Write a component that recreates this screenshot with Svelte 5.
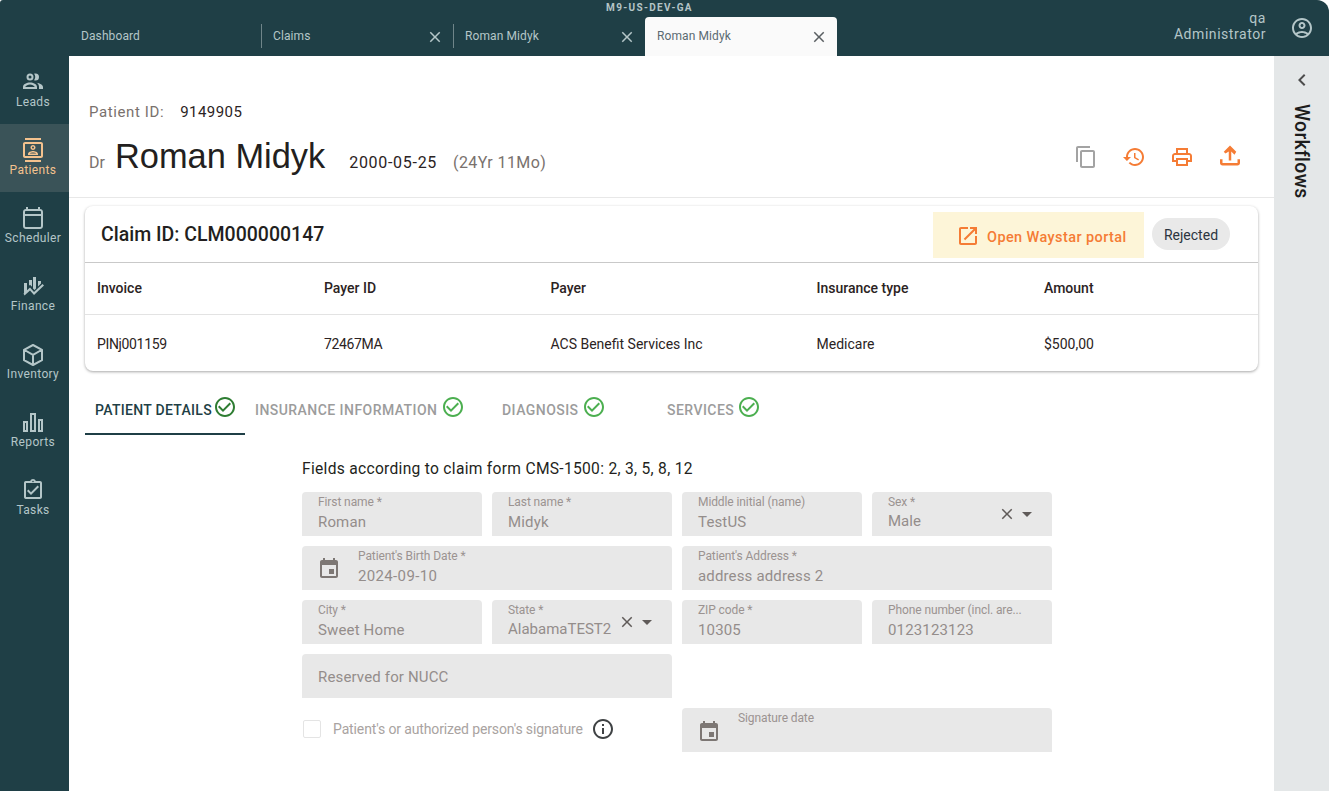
<script>
  const P = {
    close: 'M19 6.41 17.59 5 12 10.59 6.41 5 5 6.41 10.59 12 5 17.59 6.41 19 12 13.41 17.59 19 19 17.59 13.41 12z',
    check: 'M16.59 7.58 10 14.17l-3.59-3.58L5 12l5 5 8-8zM12 2C6.48 2 2 6.48 2 12s4.48 10 10 10 10-4.48 10-10S17.52 2 12 2zm0 18c-4.42 0-8-3.58-8-8s3.58-8 8-8 8 3.58 8 8-3.58 8-8 8z',
    event: 'M17 12h-5v5h5v-5zM16 1v2H8V1H6v2H5c-1.11 0-1.99.9-1.99 2L3 19c0 1.1.89 2 2 2h14c1.1 0 2-.9 2-2V5c0-1.1-.9-2-2-2h-1V1h-2zm3 18H5V8h14v11z'
  };
  const nav = [
    { label: 'Leads', d: 'M9 3.500a3.500 3.500 0 1 0 0 7 3.500 3.500 0 0 0 0-7zm0 2a1.500 1.500 0 1 1 0 3 1.500 1.500 0 0 1 0-3zM14.500 3.500c-.5 0-1 .1-1.400.3a5.500 5.500 0 0 1 0 6.400c.4.2.9.3 1.400.3a3.500 3.500 0 0 0 0-7zM9 12.500c-3.200 0-7 1.700-7 4.500v2h14v-2c0-2.800-3.800-4.500-7-4.500zm0 2c2 0 4 1 4.800 2.500H4.200C5 15.500 7 14.500 9 14.500zM15.500 12.700c2 .9 2.500 2.900 2.500 4.300v2h4v-2c0-2.300-3.300-4-6.500-4.300z' },
    { label: 'Patients', active: true, d: 'M20 0H4v2h16V0zM4 24h16v-2H4v2zM20 4H4c-1.100 0-2 .9-2 2v12c0 1.100.9 2 2 2h16c1.100 0 2-.9 2-2V6c0-1.100-.9-2-2-2zm0 14H4V6h16v12zm-8-6c1.380 0 2.500-1.120 2.500-2.500S13.380 7 12 7 9.500 8.120 9.500 9.500 10.620 12 12 12zm0-3.500c.55 0 1 .45 1 1s-.45 1-1 1-1-.45-1-1 .45-1 1-1zM17 15.990c0-2.090-3.310-2.990-5-2.990s-5 .9-5 2.990V17h10v-1.010zM8.810 15.500c.61-.52 2.030-1 3.190-1 1.170 0 2.590.48 3.200 1H8.810z' },
    { label: 'Scheduler', d: 'M17 1v2H7V1H5v2C3.300 3 2 4.300 2 6v14c0 1.700 1.300 3 3 3h14c1.700 0 3-1.300 3-3V6c0-1.700-1.300-3-3-3V1h-2zM4 10h16v10c0 .6-.4 1-1 1H5c-.6 0-1-.4-1-1V10zm0-2V6c0-.6.4-1 1-1h14c.6 0 1 .4 1 1v2H4z' },
    { label: 'Finance', d: 'M3 9h3v7.500l-3 3zM8 6h3v6.700l-2-2-1 1zM12 3h3v11.500l-1.500 1.500-1.500-1.500zM17 7h3v2.500l-3 3zM2.500 19.500 9 13.500l4 4.500 8.500-8 1.500 1.500-10 9.500-4-4.500-5.500 5z' },
    { label: 'Inventory', stroke: true, d: 'M12 3 21 7.800v10.400L12 23l-9-4.800V7.800zM3.500 8 12 12.800 20.500 8M12 12.800V23' },
    { label: 'Reports', d: 'M9 3v19h6V3H9zm2 2h2v15h-2V5zM2 11v11h5V11H2zm2 2h1v7H4v-7zm13-4v13h5V9h-5zm2 2h1v9h-1v-9z' },
    { label: 'Tasks', d: 'M18 9l-1.410-1.420L10 14.170l-2.590-2.580L6 13l4 4zm1-6h-4.180C14.400 1.840 13.300 1 12 1c-1.300 0-2.400.84-2.820 2H5c-.14 0-.27.01-.4.04-.39.08-.74.28-1.010.55-.18.18-.33.4-.43.64-.1.23-.16.49-.16.77v14c0 .27.06.54.16.78s.25.45.43.64c.27.27.62.47 1.010.55.13.02.26.03.4.03h14c1.100 0 2-.9 2-2V5c0-1.100-.9-2-2-2zm-7-.25c.41 0 .75.34.75.75s-.34.75-.75.75-.75-.34-.75-.75.34-.75.75-.75zM19 19H5V5h14v14z' }
  ];
  const tabs = [
    { label: 'Dashboard' },
    { label: 'Claims', close: true },
    { label: 'Roman Midyk', close: true },
    { label: 'Roman Midyk', close: true, active: true }
  ];
  const steps = [
    { label: 'PATIENT DETAILS', active: true, w: 160, pad: 10, gap: 1 },
    { label: 'INSURANCE INFORMATION', w: 232, pad: 10, gap: 4 },
    { label: 'DIAGNOSIS', w: 160, pad: 25, gap: 3 },
    { label: 'SERVICES', w: 130, pad: 30, gap: 3 }
  ];
  const columns = ['Invoice', 'Payer ID', 'Payer', 'Insurance type', 'Amount'];
  const row = ['PINj001159', '72467MA', 'ACS Benefit Services Inc', 'Medicare', '$500,00'];
  const actions = [
    { c: 'grey', d: 'M16 1H4c-1.100 0-2 .9-2 2v14h2V3h12V1zm3 4H8c-1.100 0-2 .9-2 2v14c0 1.100.9 2 2 2h11c1.100 0 2-.9 2-2V7c0-1.100-.9-2-2-2zm0 16H8V7h11v14z' },
    { c: 'orange', d: 'M13 3c-4.970 0-9 4.030-9 9H1l3.890 3.890.07.14L9 12H6c0-3.870 3.130-7 7-7s7 3.130 7 7-3.130 7-7 7c-1.930 0-3.680-.79-4.940-2.060l-1.420 1.420C8.270 19.990 10.510 21 13 21c4.970 0 9-4.030 9-9s-4.030-9-9-9zm-1 5v5l4.280 2.540.72-1.210-3.500-2.080V8H12z' },
    { c: 'orange', d: 'M19 8h-1V3H6v5H5c-1.660 0-3 1.340-3 3v6h4v4h12v-4h4v-6c0-1.660-1.340-3-3-3zM8 5h8v3H8V5zm8 14H8v-4h8v4zm2-4v-2H6v2H4v-4c0-.55.45-1 1-1h14c.55 0 1 .45 1 1v4h-2z' },
    { c: 'orange up', d: 'M18 15v3H6v-3H4v3c0 1.100.9 2 2 2h12c1.100 0 2-.9 2-2v-3h-2zM7 9l1.410 1.410L11 8.830V16h2V8.830l2.590 2.580L17 9l-5-5-5 5z' }
  ];
</script>

<div class="shell">
  <header class="top">
    <div class="env">M9-US-DEV-GA</div>
    <div class="tabs">
      {#each tabs as t, i}
        <div class="tab" class:active={t.active} class:divided={i > 0 && !t.active}>
          <span>{t.label}</span>
          {#if t.close}
            <svg viewBox="0 0 24 24" class="tab-x"><path d={P.close} /></svg>
          {/if}
        </div>
      {/each}
    </div>
    <div class="user">
      <div class="user-text"><div>qa</div><div>Administrator</div></div>
      <svg viewBox="0 0 24 24" class="avatar"><path d="M12 2C6.480 2 2 6.480 2 12s4.480 10 10 10 10-4.480 10-10S17.520 2 12 2zM7.350 18.500C8.660 17.560 10.260 17 12 17s3.340.56 4.650 1.500c-1.310.94-2.910 1.500-4.650 1.500s-3.340-.56-4.650-1.500zm10.790-1.380C16.450 15.800 14.320 15 12 15s-4.450.8-6.140 2.120C4.700 15.730 4 13.950 4 12c0-4.420 3.580-8 8-8s8 3.580 8 8c0 1.950-.7 3.730-1.860 5.120zM12 6c-1.930 0-3.500 1.570-3.500 3.500S10.070 13 12 13s3.500-1.570 3.500-3.500S13.930 6 12 6zm0 5c-.83 0-1.500-.67-1.500-1.500S11.170 8 12 8s1.500.67 1.500 1.500S12.830 11 12 11z" /></svg>
    </div>
  </header>

  <div class="body">
    <nav class="side">
      {#each nav as n}
        <div class="nav-item" class:active={n.active}>
          <svg viewBox="0 0 24 24"><path d={n.d} class:st={n.stroke} /></svg>
          <span>{n.label}</span>
        </div>
      {/each}
    </nav>

    <main class="main">
      <section class="patient">
        <div class="pid"><span class="muted">Patient ID:</span><span class="pid-val">9149905</span></div>
        <div class="name-row">
          <span class="title muted">Dr</span>
          <h1>Roman Midyk</h1>
          <span class="dob">2000-05-25</span>
          <span class="age">(24Yr 11Mo)</span>
          <div class="actions">
            {#each actions as a}
              <svg viewBox="0 0 24 24" class={a.c}><path d={a.d} /></svg>
            {/each}
          </div>
        </div>
      </section>

      <div class="content">
        <section class="card">
          <div class="card-head">
            <h2>Claim ID: CLM000000147</h2>
            <div class="portal">
              <svg viewBox="0 0 24 24"><path d="M19 19H5V5h7V3H5c-1.110 0-2 .9-2 2v14c0 1.100.89 2 2 2h14c1.100 0 2-.9 2-2v-7h-2v7zM14 3v2h3.590l-9.830 9.830 1.410 1.410L19 6.410V10h2V3h-7z" /></svg>
              <span>Open Waystar portal</span>
            </div>
            <div class="chip"><span>Rejected</span></div>
          </div>
          <div class="tr th">{#each columns as c}<div>{c}</div>{/each}</div>
          <div class="tr td">{#each row as c}<div>{c}</div>{/each}</div>
        </section>

        <div class="steps">
          {#each steps as s}
            <div class="step" class:active={s.active} style="width:{s.w}px;padding-left:{s.pad}px;gap:{s.gap}px">
              <span>{s.label}</span>
              <svg viewBox="0 0 24 24"><path d={P.check} /></svg>
            </div>
          {/each}
        </div>

        <form class="form">
          <p class="hint">Fields according to claim form CMS-1500: 2, 3, 5, 8, 12</p>
          <div class="grid">
            <div class="field"><label>First name *</label><div class="val">Roman</div></div>
            <div class="field"><label>Last name *</label><div class="val">Midyk</div></div>
            <div class="field"><label>Middle initial (name)</label><div class="val">TestUS</div></div>
            <div class="field select"><label>Sex *</label><div class="val">Male</div>
              <div class="sel-ic"><svg viewBox="0 0 24 24"><path d={P.close} /></svg><i></i></div></div>

            <div class="field wide date"><svg viewBox="0 0 24 24" class="cal"><path d={P.event} /></svg><div class="date-txt"><label>Patient's Birth Date *</label><div class="val">2024-09-10</div></div></div>
            <div class="field wide"><label>Patient's Address *</label><div class="val">address address 2</div></div>

            <div class="field"><label>City *</label><div class="val">Sweet Home</div></div>
            <div class="field select"><label>State *</label><div class="val">AlabamaTEST2</div>
              <div class="sel-ic"><svg viewBox="0 0 24 24"><path d={P.close} /></svg><i></i></div></div>
            <div class="field"><label>ZIP code *</label><div class="val">10305</div></div>
            <div class="field"><label>Phone number (incl. are...</label><div class="val">0123123123</div></div>

            <div class="field wide placeholder"><div class="val">Reserved for NUCC</div></div>
            <div class="wide"></div>

            <div class="wide sign">
              <span class="box"></span>
              <span class="sign-l">Patient's or authorized person's signature</span>
              <svg viewBox="0 0 24 24"><path d="M11 7h2v2h-2zm0 4h2v6h-2zm1-9C6.480 2 2 6.480 2 12s4.480 10 10 10 10-4.480 10-10S17.520 2 12 2zm0 18c-4.410 0-8-3.590-8-8s3.590-8 8-8 8 3.590 8 8-3.590 8-8 8z" /></svg>
            </div>
            <div class="field wide date"><svg viewBox="0 0 24 24" class="cal low"><path d={P.event} /></svg><div class="date-txt"><label>Signature date</label></div></div>
          </div>
        </form>
      </div>
    </main>

    <aside class="flows">
      <svg viewBox="0 0 24 24"><path d="M15.410 7.410 14 6l-6 6 6 6 1.410-1.410L10.830 12z" /></svg>
      <div class="flows-t">Workflows</div>
    </aside>
  </div>
</div>

<style>
  :global(body) { margin: 0; background: #fff; font-family: Roboto, "Liberation Sans", sans-serif; }
  .shell { width: 1329px; height: 791px; display: flex; flex-direction: column; overflow: hidden; background: #1f3f46; border-radius: 3px 12px 0 0; }
  .top { height: 56px; flex: none; position: relative; display: flex; align-items: flex-end; padding-left: 69px; }
  .env { position: absolute; left: 0; width: 1299px; top: 2px; text-align: center; font-size: 10px; font-weight: 700; letter-spacing: 1.35px; line-height: 12px; color: #b4c4c6; }
  .tabs { display: flex; height: 39px; }
  .tab { width: 192px; box-sizing: border-box; height: 39px; display: flex; align-items: center; justify-content: space-between; padding: 0 9px 0 12px; font-size: 12px; font-weight: 400; letter-spacing: .1px; color: #b4c6c8; position: relative; }
  .tab span { position: relative; top: -1px; }
  .tab.divided::before { content: ""; position: absolute; left: 0; top: 7px; height: 24px; width: 1px; background: #6f8589; }
  .tab.active { background: #fafafa; border-radius: 4px 4px 0 0; color: #5b6a72; }
  .tab-x { width: 18px; height: 18px; fill: #b4c6c8; }
  .tab.active .tab-x { fill: #5a5f62; }
  .user { position: absolute; right: 0; top: 0; height: 56px; display: flex; align-items: center; }
  .user-text { text-align: right; font-size: 14px; line-height: 16px; color: #b4c6c8; letter-spacing: .55px; margin-top: -5px; }
  .avatar { width: 24px; height: 24px; fill: #b4c6c8; margin: 0 15px 0 24px; }
  .body { flex: 1; display: flex; min-height: 0; }
  .side { width: 69px; flex: none; display: flex; flex-direction: column; }
  .nav-item { height: 68px; display: flex; flex-direction: column; align-items: center; padding: 14px 3px 0 0; box-sizing: border-box; color: #b4c6c8; font-size: 12px; line-height: 14px; letter-spacing: .35px; font-weight: 400; }
  .nav-item svg { width: 24px; height: 24px; fill: #b4c6c8; flex: none; margin-bottom: 1px; }
  .st { fill: none; stroke: #b4c6c8; stroke-width: 2; stroke-linejoin: round; }
  .nav-item.active { background: #3a5358; color: #f4c28e; }
  .nav-item.active svg { fill: #f4c28e; }
  .main { flex: 1; background: #fff; min-width: 0; }
  .patient { height: 142px; box-sizing: border-box; border-bottom: 1px solid #e8e8e8; padding: 47px 32px 0 20px; }
  .pid { font-size: 15px; line-height: 18px; display: flex; gap: 16px; letter-spacing: .6px; }
  .muted { color: #79716d; }
  .pid-val { color: #2b2323; letter-spacing: .45px; }
  .name-row { display: flex; align-items: baseline; margin-top: 13px; position: relative; }
  .title { font-size: 16px; width: 26px; }
  h1 { margin: 0; font: 400 34.4px/44px "Liberation Sans", sans-serif; color: #231f20; }
  .dob { margin-left: 24px; font-size: 16px; color: #2b2323; letter-spacing: .7px; }
  .age { margin-left: 16px; font-size: 16px; color: #79716d; letter-spacing: .4px; }
  .actions { margin-left: auto; display: flex; gap: 24px; align-self: center; margin-top: 2px; }
  .actions svg { width: 24px; height: 24px; }
  .actions .up { transform: translateY(-1.5px) scale(1.25); }
  .grey { fill: #a3a3a3; }
  .orange { fill: #f57c35; }
  .content { padding: 8px 16px 0; }
  .card { height: 165px; box-sizing: border-box; border-radius: 8px; background: #fff; box-shadow: 0 1px 3px rgba(0,0,0,.35); overflow: hidden; }
  .card-head { height: 56px; display: flex; align-items: center; padding: 0 28px 0 16px; border-bottom: 1px solid #c9c9c9; }
  h2 { margin: 0; font-size: 19.5px; font-weight: 500; color: #231f20; flex: 1; }
  .portal { width: 211px; height: 46px; margin-top: 1px; background: #fdf5d8; display: flex; align-items: center; padding-left: 23px; box-sizing: border-box; gap: 7px; color: #f57c35; font-size: 14.5px; font-weight: 500; letter-spacing: .4px; }
  .portal svg { width: 24px; height: 24px; fill: #f57c35; margin-top: 3px; }
  .portal span { margin-top: 5px; }
  .chip { margin-left: 8px; width: 78px; height: 32px; border-radius: 16px; background: #e9e9e9; display: flex; align-items: center; justify-content: center; font-size: 14px; color: #2c3540; }
  .chip span { margin-top: 1px; }
  .tr { display: grid; grid-template-columns: 227px 226.500px 266px 227.500px 1fr; padding-left: 12px; font-size: 14px; color: #2b2323; }
  .th { height: 51px; align-items: center; font-weight: 500; border-bottom: 1px solid #e3e3e3; }
  .th div { margin-top: -2px; }
  .td { height: 57px; align-items: center; }
  .td div:nth-child(-n+2) { letter-spacing: -.35px; }
  .steps { display: flex; height: 50px; margin-top: 14px; }
  .step { height: 50px; box-sizing: border-box; display: flex; align-items: center; font-size: 14px; font-weight: 500; letter-spacing: .45px; color: #9c9c9c; padding-bottom: 2px; }
  .step span { margin-top: 1px; }
  .step.active { color: #1f3f46; border-bottom: 2px solid #1f3f46; padding-bottom: 0; letter-spacing: .3px; }
  .step svg { width: 24px; height: 24px; fill: #4caf50; flex: none; margin-top: -4px; }
  .step.active svg { fill: #2e7d32; }
  .form { width: 750px; margin: 24px 0 0 217px; }
  .hint { margin: 0 0 13px; font-size: 15.6px; line-height: 20px; color: #231f20; letter-spacing: .29px; white-space: nowrap; }
  .grid { display: grid; grid-template-columns: repeat(4, 180px); gap: 10px; grid-auto-rows: 44px; }
  .wide { grid-column: span 2; }
  .field { background: #e8e8e8; border-radius: 4px 4px 0 0; padding: 3px 16px 0; box-sizing: border-box; position: relative; min-width: 0; }
  label { display: block; font-size: 12px; line-height: 14px; color: #9b9391; letter-spacing: -.1px; }
  .val { font-size: 15px; line-height: 20px; margin-top: 3px; letter-spacing: .15px; color: #948d8b; white-space: nowrap; }
  .select .val { margin-top: 2px; letter-spacing: 0; }
  .placeholder .val { margin-top: 10px; }
  .sel-ic { position: absolute; right: 20px; top: 13px; display: flex; align-items: center; gap: 6px; }
  .sel-ic svg { width: 18px; height: 18px; fill: #5f5a58; }
  .sel-ic i { width: 0; height: 0; border: 5px solid transparent; border-top-color: #5f5a58; border-bottom: 0; }
  .date { display: flex; gap: 17px; padding-left: 15px; }
  .cal { width: 24px; height: 24px; fill: #7d7774; flex: none; margin-top: 8px; }
  .cal.low { margin-top: 9px; }
  .date .val { letter-spacing: .35px; }
  .sign { display: flex; align-items: center; padding-left: 1px; font-size: 14px; color: #a9a3a1; margin-top: -2px; }
  .box { width: 16px; height: 16px; border: 1.500px solid #e4e4e4; border-radius: 2px; flex: none; }
  .sign-l { margin-left: 12px; letter-spacing: -.13px; white-space: nowrap; }
  .sign svg { width: 24px; height: 24px; fill: #3f4244; margin-left: 8px; }
  .flows { width: 55px; flex: none; background: #e4e7e8; display: flex; flex-direction: column; align-items: center; padding-top: 12px; box-sizing: border-box; }
  .flows svg { width: 24px; height: 24px; fill: #4d4d4d; }
  .flows-t { writing-mode: vertical-rl; font-size: 19.4px; font-weight: 500; color: #1c1c1c; margin-top: 12px; letter-spacing: .3px; }
</style>
